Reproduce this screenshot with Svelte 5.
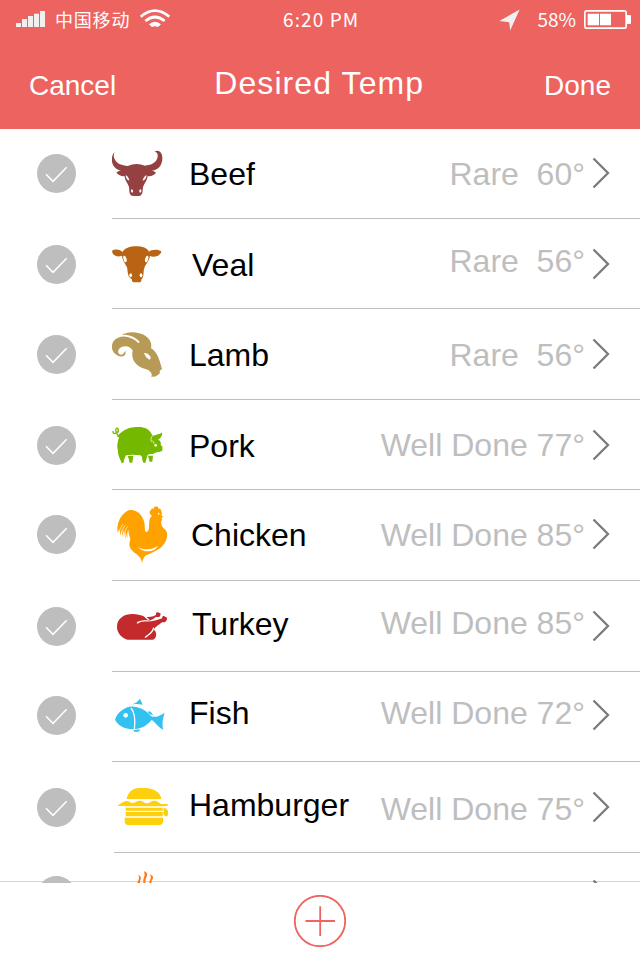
<script lang="ts">
    type Meat = {
        name: string;
        level: string;
        icon: string;
        color: string;
        origin: string;
        height: number;
        checkTop: number;
        nameTop: number;
        nameLeft: number;
        levelTop: number;
    };

    const meats: Meat[] = [
        { name: 'Beef', level: 'Rare  60°', icon: 'beef', color: '#954142', origin: '276 -18', height: 90, checkTop: 25, nameTop: 27, nameLeft: 21, levelTop: 27 },
        { name: 'Veal', level: 'Rare  56°', icon: 'veal', color: '#b96415', origin: '36 -33', height: 90, checkTop: 26, nameTop: 28, nameLeft: 24, levelTop: 24 },
        { name: 'Lamb', level: 'Rare  56°', icon: 'lamb', color: '#b79a55', origin: '36 -33', height: 91, checkTop: 26, nameTop: 28, nameLeft: 21, levelTop: 28 },
        { name: 'Pork', level: 'Well Done 77°', icon: 'pork', color: '#74b800', origin: '36 -30', height: 90, checkTop: 26, nameTop: 28, nameLeft: 21, levelTop: 27 },
        { name: 'Chicken', level: 'Well Done 85°', icon: 'chicken', color: '#ffa200', origin: '36 -15', height: 91, checkTop: 25, nameTop: 27, nameLeft: 23, levelTop: 27 },
        { name: 'Turkey', level: 'Well Done 85°', icon: 'turkey', color: '#c22a2c', origin: '36 -57', height: 91, checkTop: 26, nameTop: 25, nameLeft: 24, levelTop: 24 },
        { name: 'Fish', level: 'Well Done 72°', icon: 'fish', color: '#33c1f0', origin: '36 -54', height: 90, checkTop: 24, nameTop: 23, nameLeft: 21, levelTop: 23 },
        { name: 'Hamburger', level: 'Well Done 75°', icon: 'burger', color: '#fdd00d', origin: '36 -39', height: 91, checkTop: 26, nameTop: 25, nameLeft: 21, levelTop: 29 },
        { name: '', level: '', icon: 'steam', color: '#ff7a17', origin: '276 39', height: 91, checkTop: 23, nameTop: 25, nameLeft: 21, levelTop: 25 }
    ];
</script>

{#snippet glyph(kind: string)}
    {#if kind === 'beef'}
        <path d="M284 51C272 62 273 86 284 97C290 104 299 107 306 109C300 107 293 108 289 113C297 121 306 125 314 123C314 136 323 143 327 156C329 168 326 176 335 182Q348 184 361 182C370 176 367 167 369 157C373 144 382 136 383 123C393 125 401 121 408 113C402 107 394 107 388 110C401 107 414 103 420 94C429 81 430 59 420 50C414 46 408 47 404 50C414 51 415 63 411 72C406 85 391 90 375 92Q348 82 323 93C305 91 292 87 286 76C280 67 280 58 284 51Z" />
        <g class="cut">
            <path d="M317 121Q325 123 328 137Q318 135 317 121ZM380 121Q371 123 368 137Q378 135 380 121Z" />
            <ellipse cx="336" cy="168" rx="3" ry="5" transform="rotate(-15 336 168)" />
            <ellipse cx="361" cy="168" rx="3" ry="5" transform="rotate(15 361 168)" />
        </g>
    {:else if kind === 'veal'}
        <path d="M68 66C76 43 140 43 147 65C153 58 176 57 184 64C184 77 162 84 150 78C148 92 137 103 133 114C129 124 133 139 125 147Q124 155 121 157H99Q96 155 95 147C82 142 84 125 81 112C77 102 67 92 66 77C53 83 37 77 36 63C44 56 61 58 68 66Z" />
        <g class="cut">
            <ellipse cx="75" cy="87" rx="4.5" ry="10" transform="rotate(-15 75 87)" />
            <ellipse cx="140" cy="87" rx="4.5" ry="10" transform="rotate(15 140 87)" />
            <ellipse cx="92" cy="136" rx="4" ry="6" />
            <ellipse cx="123" cy="136" rx="4" ry="6" />
        </g>
    {:else if kind === 'lamb'}
        <path d="M65 44C83 33 116 34 136 47C152 58 156 71 153 85C167 92 176 108 186 147C181 151 177 152 180 159Q175 166 164 170Q156 169 154 171Q157 163 152 157C144 145 130 148 117 139C99 126 94 111 98 91C91 80 76 75 63 82C51 90 52 103 64 104C70 103 73 97 76 92C80 107 67 113 54 107C36 100 30 79 41 63C58 43 91 45 116 70L119 65C106 50 87 43 65 44Z" />
        <path class="cut" d="M132 99Q143 98 151 109Q153 119 149 119Q137 114 132 99Z" />
    {:else if kind === 'pork'}
        <path d="M51 80C64 65 82 52 103 52C132 49 147 56 156 74C162 80 166 75 173 73C180 72 184 70 186 67C188 75 184 84 174 90C184 92 182 100 183 107L187 108V122C177 128 169 124 164 130C153 134 145 131 142 137C139 145 138 153 136 158H130Q126 150 126 142Q125 137 121 136Q95 132 78 136Q72 147 70 159H65C62 149 54 139 54 123C50 111 52 97 57 82Z" />
        <path d="M83 138Q93 136 100 138Q98 150 97 158H89Q87 147 83 138ZM144 137H159L157 155H149Z" />
        <path class="tail" d="M56 78C49 73 45 60 49 55C56 51 58 67 48 69C42 72 38 70 39 63" />
        <path class="gap thin" d="M158 76Q151 84 153 94M153 94Q162 91 162 102" />
        <circle class="cut" cx="167" cy="106" r="4" />
    {:else if kind === 'chicken'}
        <path d="M126 204C125 188 114 181 101 171C89 161 85 151 91 133L84 107L82 132L76 107L77 132L69 105L70 129L63 104L62 123L57 103L53 114C48 85 64 55 86 46C108 41 126 58 132 79C137 97 131 110 140 111C151 107 145 89 149 73Q151 66 156 62C147 58 147 47 153 46Q153 39 161 41Q162 32 169 35Q174 33 176 41Q184 40 184 49Q187 56 184 61L190 65L184 69Q189 73 184 77C182 86 185 96 194 103C207 112 202 137 187 153C174 167 150 176 135 183Q129 190 126 204Z" />
        <path class="cut" d="M112 155C130 166 155 166 174 152C164 172 132 176 112 155Z" />
        <circle class="cut" cx="176" cy="56" r="2.5" />
        <path class="gap thin" d="M57 127C55 110 61 98 69 88M64 132C64 112 69 99 75 91M72 137C71 117 75 104 83 94M82 137Q80 119 85 106" />
    {:else if kind === 'turkey'}
        <path d="M65 52C80 39 112 40 134 50C150 53 159 49 168 45C166 36 174 35 177 38C185 39 181 45 180 49C176 53 169 50 166 52C158 60 149 62 139 64C157 66 173 60 187 55C185 46 193 46 196 51C205 52 200 58 199 63C194 69 188 65 184 68C174 76 163 82 162 89C172 96 170 116 159 119H82C67 115 51 101 51 81C51 68 56 58 65 52Z" />
        <path class="gap" d="M134 49L147 60M111 70Q119 62 144 62M135 113C144 103 158 101 161 83" />
    {:else if kind === 'fish'}
        <path d="M45 89C52 66 79 47 101 50C122 51 141 63 154 79C166 83 178 79 194 68C189 84 185 98 190 120C176 112 165 97 155 89C144 105 126 115 106 117C75 119 54 107 45 89ZM96 43Q112 38 120 26L128 44Q112 41 96 43ZM99 122Q110 118 122 119Q110 131 99 122ZM143 66Q151 59 159 75Q151 77 143 66Z" />
        <circle class="cut" cx="77" cy="76" r="7" />
        <path class="gap" d="M93 54C108 71 105 102 103 119" />
    {:else if kind === 'burger'}
        <path d="M80 72C83 53 97 39 118 39H140C164 41 182 54 184 72ZM54 90C61 88 69 79 78 78C86 76 91 84 98 84C108 83 111 76 121 77C130 78 134 86 143 85C151 82 155 76 164 77C173 78 178 84 184 87H203V93H188V107H77V93H54ZM191 98C203 99 208 113 203 121C202 128 190 122 190 116ZM77 111H188V124H77ZM74 128H189V140Q188 149 179 150H84Q75 149 74 140Z" />
        <path class="gap" d="M76 96H189" />
    {:else}
        <path d="M351 130C354 122 362 112 353 106C365 107 364 116 360 123L360 130ZM371 130C365 116 380 108 371 94C388 98 380 110 377 117L376 130ZM387 130C389 119 397 113 389 103C404 108 399 117 395 122L394 130Z" />
    {/if}
{/snippet}

<main class="screen">
    <header>
        <div class="status">
            <div class="carrier">
                <svg class="signal" viewBox="48 33 87 48" aria-hidden="true">
                    <path d="M48 69h15v12H48zM66 57h15v24H66zM84 48h15v33H84zM102 41h15v40h-15zM120 33h15v48h-15z" />
                </svg>
                <span class="operator">中国移动</span>
                <svg class="wifi" viewBox="420 26 90 57" aria-hidden="true">
                    <path d="M422 49Q465 13 508 49M436 62Q465 38 494 62" />
                    <path class="dot" d="M447 72Q465 57 483 72L474 80Q465 75 456 80Z" />
                </svg>
            </div>
            <span class="time">6:20 PM</span>
            <div class="power">
                <svg class="location" viewBox="540 26 64 66" aria-hidden="true">
                    <path d="M603 27L541 62L571 66L574 91Z" />
                </svg>
                <span class="percent">58%</span>
                <svg class="battery" viewBox="792 30 141 57" aria-hidden="true">
                    <rect x="794.5" y="32.5" width="124" height="52" rx="6" />
                    <path d="M921 45h9q3 0 3 3v21q0 3-3 3h-9zM803 41h34v35h-34zM840 41h33v35h-33z" />
                </svg>
            </div>
        </div>
        <nav>
            <button class="action">Cancel</button>
            <h1>Desired Temp</h1>
            <button class="action done">Done</button>
        </nav>
    </header>

    <ul class="list">
        {#each meats as meat}
            <li
                style:height="{meat.height}px"
                style:--check-top="{meat.checkTop}px"
                style:--name-top="{meat.nameTop}px"
                style:--name-left="{meat.nameLeft}px"
                style:--level-top="{meat.levelTop}px"
            >
                <svg class="check" viewBox="51 57 117 117" aria-hidden="true">
                    <circle cx="109.5" cy="115.5" r="58.5" />
                    <path d="M78 118L99 139L140 97" />
                </svg>
                <div class="body">
                    <svg class="icon" viewBox="{meat.origin} 168 270" fill={meat.color} stroke={meat.color} aria-hidden="true">
                        {@render glyph(meat.icon)}
                    </svg>
                    <span class="name">{meat.name}</span>
                    <span class="level">{meat.level}</span>
                    <svg class="chevron" viewBox="0 0 18 32" aria-hidden="true">
                        <path d="M1.5 1.5L16 16L1.5 30.5" />
                    </svg>
                </div>
            </li>
        {/each}
    </ul>

    <footer>
        <button class="add" aria-label="Add">
            <svg viewBox="0 0 52 52" aria-hidden="true">
                <circle cx="26" cy="26" r="25.2" />
                <path d="M11.5 26H41M26.2 11.3V41" />
            </svg>
        </button>
    </footer>
</main>

<style>
    :global(body) {
        background: #fff;
    }

    .screen {
        display: flex;
        flex-direction: column;
        width: 640px;
        height: 960px;
        overflow: hidden;
        background: #fff;
        font-family: 'Liberation Sans', Arial, sans-serif;
    }

    svg {
        display: block;
        flex: none;
    }

    button {
        padding: 0;
        border: 0;
        background: none;
        font: inherit;
        color: inherit;
    }

    header {
        flex: none;
        height: 129px;
        background: #ec6360;
        color: #fff;
    }

    .status {
        display: grid;
        grid-template-columns: 267px auto 1fr;
        height: 40px;
        padding: 0 9px 0 16px;
        box-sizing: border-box;
        font-family: 'Noto Sans CJK SC', 'Noto Sans', sans-serif;
        line-height: 38px;
    }

    .carrier,
    .power {
        display: flex;
        align-items: flex-start;
    }

    .power {
        justify-content: flex-end;
    }

    .signal {
        width: 29px;
        height: 16px;
        margin-top: 11px;
        fill: #f1efef;
    }

    .operator {
        margin-left: 10px;
        font-size: 18px;
        letter-spacing: 0.8px;
    }

    .wifi {
        width: 30px;
        height: 19px;
        margin: 9px 0 0 10px;
        fill: none;
        stroke: #fff;
        stroke-width: 8;
    }

    .wifi .dot {
        fill: #fff;
        stroke: none;
    }

    .time {
        font-size: 19px;
        letter-spacing: 1.1px;
    }

    .location {
        width: 21px;
        height: 22px;
        margin: 9px 17px 0 0;
        fill: #f1efef;
    }

    .percent {
        margin-right: 8px;
        font-size: 19px;
        letter-spacing: 0;
    }

    .battery {
        width: 47px;
        height: 19px;
        margin-top: 10px;
        fill: #fff;
    }

    .battery rect {
        fill: none;
        stroke: #fff;
        stroke-width: 5;
    }

    nav {
        display: flex;
        padding: 25px 29px 0 29px;
    }

    .action {
        height: 32px;
        margin-top: 5px;
        font-size: 28px;
        line-height: 32px;
    }

    .done {
        margin-left: auto;
    }

    h1 {
        margin: 0 0 0 98px;
        font-size: 32px;
        font-weight: 400;
        line-height: 36px;
        letter-spacing: 1.1px;
    }

    /* the scrolled list runs slightly over the toolbar's top rule */
    .list {
        position: relative;
        z-index: 1;
        flex: none;
        height: 754px;
        margin: 0 0 -2px;
        padding: 0;
        overflow: hidden;
        list-style: none;
    }

    li {
        display: flex;
        padding-left: 37px;
    }

    .check {
        width: 39px;
        height: 39px;
        margin: var(--check-top) 36px 0 0;
        fill: #bebebe;
    }

    .check path {
        fill: none;
        stroke: #fff;
        stroke-width: 4.5;
    }

    .body {
        display: flex;
        flex: 1;
        align-items: flex-start;
        box-sizing: border-box;
        height: 100%;
        padding-right: 30px;
        border-bottom: 1px solid #bebebe;
    }

    /* the last visible divider starts a touch further in */
    li:nth-child(8) .check {
        margin-right: 38px;
    }

    li:nth-child(8) .icon {
        margin-left: -2px;
    }

    .icon {
        width: 56px;
        height: 90px;
        stroke-width: 0;
    }

    .icon .cut {
        fill: #fff;
    }

    .icon .gap {
        fill: none;
        stroke: #fff;
        stroke-width: 4;
    }

    .icon .thin {
        stroke-width: 2;
    }

    .icon .tail {
        fill: none;
        stroke-width: 4;
    }

    .name,
    .level {
        font-size: 32px;
        line-height: 36px;
        white-space: pre;
    }

    .name {
        margin: var(--name-top) 0 0 var(--name-left);
        color: #000;
    }

    .level {
        margin: var(--level-top) 7px 0 auto;
        color: #bebebe;
    }

    .chevron {
        width: 18px;
        height: 32px;
        margin-top: calc(var(--check-top) + 3px);
        fill: none;
        stroke: #7b7b7b;
        stroke-width: 2.3;
    }

    footer {
        flex: 1;
        display: flex;
        justify-content: center;
        align-items: flex-start;
        box-sizing: border-box;
        padding-top: 13px;
        border-top: 1px solid #d5d5d5;
    }

    .add {
        width: 52px;
        height: 52px;
    }

    .add svg {
        width: 52px;
        height: 52px;
        fill: none;
        stroke: #ed6460;
        stroke-width: 1.8;
    }
</style>
